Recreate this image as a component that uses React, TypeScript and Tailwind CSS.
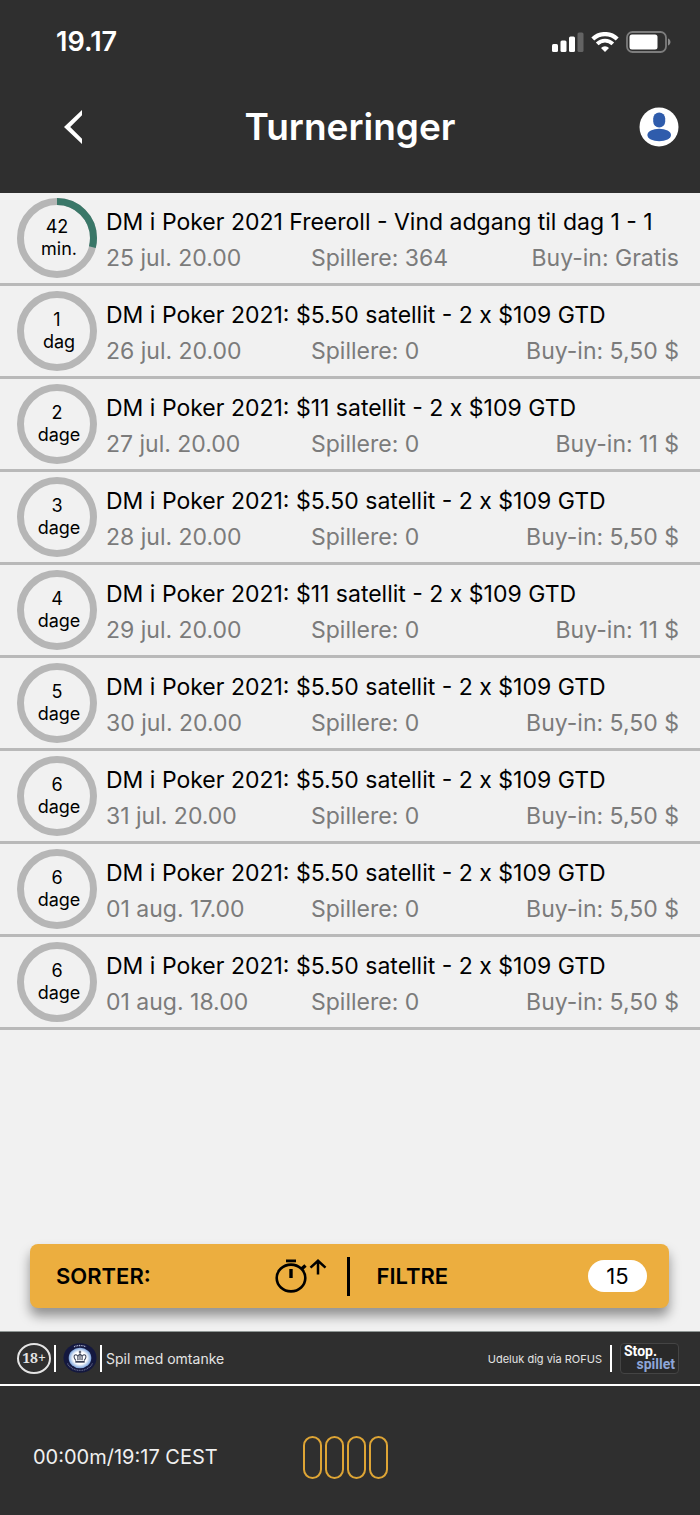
type Tournament = {
  count: number;
  unit: string;
  title: string;
  start: string;
  players: number;
  buyIn: string;
  progress?: number;
};

const SATELLITE_5 = "DM i Poker 2021: $5.50 satellit - 2 x $109 GTD";
const SATELLITE_11 = "DM i Poker 2021: $11 satellit - 2 x $109 GTD";

const tournaments: Tournament[] = [
  {
    count: 42,
    unit: "min.",
    title: "DM i Poker 2021 Freeroll - Vind adgang til dag 1 - 1",
    start: "25 jul. 20.00",
    players: 364,
    buyIn: "Gratis",
    progress: 0.29,
  },
  { count: 1, unit: "dag", title: SATELLITE_5, start: "26 jul. 20.00", players: 0, buyIn: "5,50 $" },
  { count: 2, unit: "dage", title: SATELLITE_11, start: "27 jul. 20.00", players: 0, buyIn: "11 $" },
  { count: 3, unit: "dage", title: SATELLITE_5, start: "28 jul. 20.00", players: 0, buyIn: "5,50 $" },
  { count: 4, unit: "dage", title: SATELLITE_11, start: "29 jul. 20.00", players: 0, buyIn: "11 $" },
  { count: 5, unit: "dage", title: SATELLITE_5, start: "30 jul. 20.00", players: 0, buyIn: "5,50 $" },
  { count: 6, unit: "dage", title: SATELLITE_5, start: "31 jul. 20.00", players: 0, buyIn: "5,50 $" },
  { count: 6, unit: "dage", title: SATELLITE_5, start: "01 aug. 17.00", players: 0, buyIn: "5,50 $" },
  { count: 6, unit: "dage", title: SATELLITE_5, start: "01 aug. 18.00", players: 0, buyIn: "5,50 $" },
];

function StatusBar() {
  return (
    <div className="flex h-[84px] items-center justify-between pr-7 pl-14 text-white">
      <span className="text-[27px] font-semibold">19.17</span>
      <div className="flex items-center gap-[7px]">
        <svg width="32" height="20" viewBox="0 0 32 20" fill="currentColor" aria-hidden>
          <rect x="0" y="12" width="6" height="8" rx="1.5" />
          <rect x="8.5" y="8.5" width="6" height="11.5" rx="1.5" />
          <rect x="17" y="4.5" width="6" height="15.5" rx="1.5" />
          <rect x="25.5" y="0.5" width="6" height="19.5" rx="1.5" opacity="0.25" />
        </svg>
        <svg width="28" height="20" viewBox="0 0 28 20" fill="none" stroke="currentColor" aria-hidden>
          <path d="M1.8 7a17.5 17.5 0 0 1 24.4 0" strokeWidth="4.2" />
          <path d="M6.2 11.8a11 11 0 0 1 15.6 0" strokeWidth="3.8" />
          <path d="M14 20l-4-4a5.7 5.7 0 0 1 8 0z" fill="currentColor" stroke="none" />
        </svg>
        <svg width="46" height="22" viewBox="0 0 46 22" aria-hidden>
          <rect x="1" y="1" width="39" height="20" rx="5.5" fill="none" stroke="#7d7d7d" strokeWidth="1.8" />
          <rect x="3.5" y="3.5" width="28" height="15" rx="2.5" fill="currentColor" />
          <path d="M42 7.5c3.3 1.3 3.3 5.7 0 7z" fill="#8a8a8a" />
        </svg>
      </div>
    </div>
  );
}

function Header() {
  return (
    <header className="bg-[#2f2f2f]">
      <StatusBar />
      <div className="flex h-[109px] items-start justify-between pr-[21px] pl-[53px] text-white">
        <button type="button" aria-label="Tilbage" className="flex h-[86px] w-10 items-center justify-center">
          <svg width="18" height="34" viewBox="0 0 18 34" fill="currentColor" aria-hidden>
            <path d="M18 0v5.2L6.2 17 18 28.8V34L0 17z" />
          </svg>
        </button>
        <h1 className="text-[37px] leading-[86px] font-semibold">Turneringer</h1>
        <div className="flex w-[72px] justify-end">
          <button type="button" aria-label="Profil" className="flex h-[86px] items-center">
            <svg width="40" height="40" viewBox="0 0 40 40" aria-hidden>
              <circle cx="20" cy="20" r="19.5" fill="#fff" />
              <rect x="14.2" y="5.5" width="12" height="15" rx="6" fill="#2f5cac" />
              <ellipse cx="20.2" cy="28" rx="11.8" ry="6.2" fill="#2f5cac" />
            </svg>
          </button>
        </div>
      </div>
    </header>
  );
}

function CountdownRing({ count, unit, progress = 0 }: { count: number; unit: string; progress?: number }) {
  return (
    <div className="grid h-20 w-20 shrink-0 place-items-center">
      <svg className="col-start-1 row-start-1" width="80" height="80" viewBox="0 0 80 80" fill="none" aria-hidden>
        <circle cx="40" cy="40" r="36.5" stroke="#b6b6b6" strokeWidth="7" />
        {progress > 0 && (
          <circle
            cx="40"
            cy="40"
            r="36.5"
            stroke="#3a7768"
            strokeWidth="7"
            pathLength={1}
            strokeDasharray={`${progress} 1`}
            transform="rotate(-90 40 40)"
          />
        )}
      </svg>
      <div className="col-start-1 row-start-1 text-center text-[18px] leading-[22px] text-black">
        <div>{count}</div>
        <div className="pl-1">{unit}</div>
      </div>
    </div>
  );
}

function TournamentRow({ tournament }: { tournament: Tournament }) {
  const { count, unit, title, start, players, buyIn, progress } = tournament;

  return (
    <li className="flex gap-[9px] border-b-[3px] border-[#b9b9b9] py-[5px] pr-[21px] pl-[17px]">
      <CountdownRing count={count} unit={unit} progress={progress} />
      <div className="min-w-0 flex-1 pt-1.5 text-[23px] leading-9">
        <h2 className="whitespace-nowrap text-black">{title}</h2>
        <div className="grid grid-cols-[205px_1fr_auto] whitespace-nowrap text-[#7b7b7b]">
          <span>{start}</span>
          <span>Spillere: {players}</span>
          <span>Buy-in: {buyIn}</span>
        </div>
      </div>
    </li>
  );
}

function SortFilterBar() {
  return (
    <div className="mr-[31px] mb-[23px] ml-[30px] flex h-16 items-center rounded-lg bg-[#ecae3f] text-[22px] font-semibold text-black shadow-[0_8px_12px_rgba(0,0,0,0.4)]">
      <button type="button" className="flex h-full flex-1 items-center justify-between pr-5 pl-[26px]">
        SORTER:
        <svg width="52" height="36" viewBox="0 0 52 36" fill="none" stroke="currentColor" aria-hidden>
          <ellipse cx="16" cy="20" rx="14.3" ry="13.4" strokeWidth="2.6" />
          <path d="M11 2.9h10" strokeWidth="2.8" />
          <path d="M16 11v9" strokeWidth="3.4" />
          <path d="M26.5 11l4-3.6" strokeWidth="3.4" />
          <path d="M43 16.5V3M35.5 9.7L43 2.8l7.5 6.9" strokeWidth="2.5" />
        </svg>
      </button>
      <div className="h-[39px] w-[3px] bg-black" />
      <button type="button" className="flex h-full flex-1 items-center justify-between pr-[22px] pl-[27px]">
        FILTRE
        <span className="w-[59px] rounded-full bg-white text-center leading-8 font-normal">15</span>
      </button>
    </div>
  );
}

function AuthorityBadge() {
  return (
    <svg width="34" height="30" viewBox="0 0 34 30" aria-hidden>
      <defs>
        <radialGradient id="badge-glow">
          <stop offset="0.6" stopColor="#fff" />
          <stop offset="1" stopColor="#7ba3dc" />
        </radialGradient>
      </defs>
      <ellipse cx="17" cy="15" rx="16.5" ry="14.7" fill="#14183f" />
      <ellipse cx="17" cy="15" rx="11.3" ry="10.3" fill="url(#badge-glow)" />
      <g fill="none" stroke="#3a4157" strokeWidth="1.1">
        <path d="M12.8 17.5c-3-3-1.8-6.5.8-5.6 1.7.6 1.5 3.2 1.1 5M21.2 17.5c3-3 1.8-6.5-.8-5.6-1.7.6-1.5 3.2-1.1 5M17 17v-6.5M15.2 17c-1-3 0-5.5 1.8-5.7 1.8.2 2.8 2.7 1.8 5.7" />
        <path d="M12.3 18.8h9.4" strokeWidth="1.8" />
        <path d="M17 7.8v2.6M15.8 9h2.4" />
      </g>
      <g fill="none" stroke="#aeb6d4" strokeWidth="1.3" strokeDasharray="1 0.7">
        <path d="M11 3.6a15 13 0 0 1 12 0" />
        <path d="M4.5 20.5a14 12.6 0 0 0 25 0" opacity="0.5" />
      </g>
    </svg>
  );
}

function ResponsibleGamingBar() {
  return (
    <div className="flex h-[55px] items-center justify-between border-t border-b-2 border-t-[#8f9694] border-b-white pr-[21px] pl-[17px] text-[#e4e4e4]">
      <div className="flex items-center">
        <span className="flex h-[31px] w-[34px] items-center justify-center rounded-[50%] border-2 border-[#e4e4e4] font-['Noto_Serif','DejaVu_Serif',serif] text-sm font-bold">
          18+
        </span>
        <span className="ml-[3px] h-[27px] w-0.5 bg-white" />
        <span className="ml-[7px]">
          <AuthorityBadge />
        </span>
        <span className="ml-[3px] h-[27px] w-0.5 bg-white" />
        <span className="ml-1 pt-0.5 text-sm">Spil med omtanke</span>
      </div>
      <div className="flex items-center">
        <a href="#rofus" className="pt-0.5 text-[11px]">
          Udeluk dig via ROFUS
        </a>
        <span className="ml-2 h-[27px] w-0.5 bg-white" />
        <a
          href="#stopspillet"
          className="ml-2 flex h-[31px] w-[59px] flex-col justify-center rounded-sm border border-[#444] bg-[#292929] px-[3px] font-['Roboto',sans-serif] text-sm leading-[13px] font-bold"
        >
          <span className="text-white">Stop.</span>
          <span className="text-right text-[#8ea6d8]">spillet</span>
        </a>
      </div>
    </div>
  );
}

function Footer() {
  return (
    <footer className="bg-[#2f2f2f]">
      <ResponsibleGamingBar />
      <div className="flex h-[129px] items-center pt-[13px] pl-[33px]">
        <span className="w-[270px] text-xl text-[#f0f0f0]">00:00m/19:17 CEST</span>
        <div className="flex gap-[3px]">
          {[0, 1, 2, 3].map((slot) => (
            <span key={slot} className="h-[43px] w-[19px] rounded-full border-2 border-[#dea535]" />
          ))}
        </div>
      </div>
    </footer>
  );
}

export default function App() {
  return (
    <div className="flex min-h-screen flex-col bg-[#f1f1f1] font-['Inter',sans-serif]">
      <Header />
      <main className="flex flex-1 flex-col justify-between">
        <ul>
          {tournaments.map((tournament) => (
            <TournamentRow key={tournament.start} tournament={tournament} />
          ))}
        </ul>
        <SortFilterBar />
      </main>
      <Footer />
    </div>
  );
}
